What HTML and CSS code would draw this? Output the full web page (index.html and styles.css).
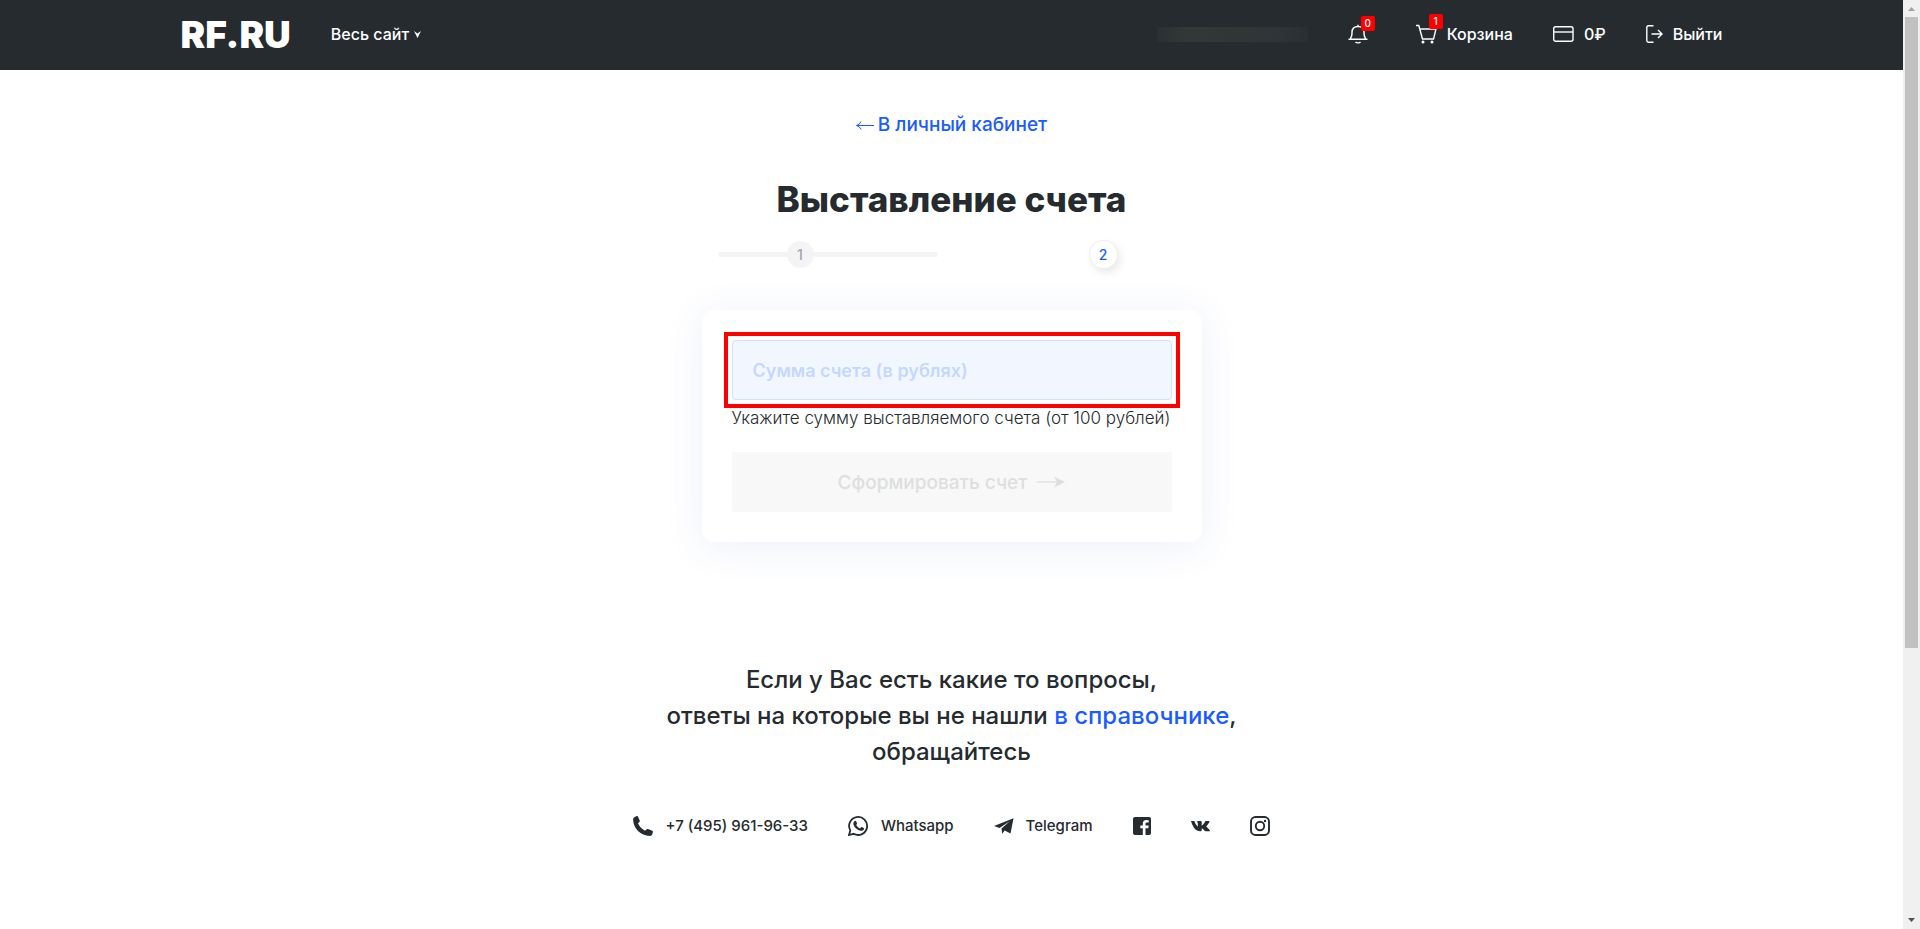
FILE: index.html
```html
<!DOCTYPE html>
<html lang="ru">
<head>
    <meta charset="UTF-8">
    <meta name="viewport" content="width=device-width, initial-scale=1.0">
    <title>Выставление счета</title>
    <link rel="stylesheet" href="styles.css">
</head>
<body>
    <div class="page">
        <!-- Header -->
        <header class="header">
            <div class="header-inner">
                <a href="#" class="logo">RF.RU</a>
                <button type="button" class="site-menu">Весь сайт
                    <svg width="7" height="7" viewBox="0 0 7 7"><path d="M0 0L3.5 2.6L7 0L3.5 7Z" fill="#fff"/></svg>
                </button>
                <nav class="user-nav">
                    <span class="user-name"></span>
                    <a href="#" class="nav-link bell" aria-label="Уведомления">
                        <svg width="20" height="20" viewBox="0 0 20 20" fill="none" stroke="#fff" stroke-width="1.4"><path d="M.5 15.2H19.5M2.8 15V13.5C4 12.5 4 11 4 8.5C4 4.500 6.200 2.500 10 2.500S16 4.500 16 8.500C16 11 16 12.500 17.200 13.500V15M10 .8V2.500M7.500 18C8.500 19.200 11.500 19.200 12.500 18"/></svg>
                        <span class="badge">0</span>
                    </a>
                    <a href="#" class="nav-link cart">
                        <svg width="21" height="20" viewBox="0 0 21 20" fill="none" stroke="#fff" stroke-width="1.4"><path d="M0 1.500H2.800L6.500 15H17.500L20 5H4"/><circle cx="7" cy="18" r="1.500" fill="#fff" stroke="none"/><circle cx="16" cy="18" r="1.500" fill="#fff" stroke="none"/></svg>
                        <span class="badge">1</span>
                        Корзина
                    </a>
                    <a href="#" class="nav-link balance">
                        <svg width="21" height="20" viewBox="0 0 21 20" fill="none" stroke="#fff" stroke-width="1.4"><rect x=".7" y="2.700" width="19.300" height="14.600" rx="2"/><path d="M1 8H20"/></svg>
                        0₽
                    </a>
                    <a href="#" class="nav-link exit">
                        <svg width="17" height="20" viewBox="0 0 17 20" fill="none" stroke="#fff" stroke-width="1.4"><path d="M7.500 1.700H2.500Q.8 1.700 .8 3.400V16.600Q.8 18.300 2.500 18.300H7.500M5.500 10H16M12 6L16 10L12 14"/></svg>
                        Выйти
                    </a>
                </nav>
            </div>
        </header>

        <!-- Invoice form -->
        <main class="main">
            <a href="#" class="back-link">
                <svg width="18" height="10" viewBox="0 0 18 10" fill="none" stroke="#1a5cff" stroke-width="1"><path d="M18 5.500H1M5 1.500Q4 4.500 .5 5.500Q4 6.500 5 9.500"/></svg>
                В личный кабинет
            </a>
            <h1>Выставление счета</h1>
            <ol class="steps">
                <li class="step done"><span class="step-number">1</span></li>
                <li class="step active"><span class="step-number">2</span></li>
            </ol>
            <form class="card">
                <div class="highlight">
                    <input type="text" id="amount" class="amount" placeholder="Сумма счета (в рублях)">
                </div>
                <label for="amount" class="hint">Укажите сумму выставляемого счета (от 100 рублей)</label>
                <button type="submit" class="submit" disabled>Сформировать счет
                    <svg width="28" height="12" viewBox="0 0 28 12"><path d="M0 6H20" stroke="#dddfdf" stroke-width="1.300"/><path d="M17 .5L28 6L17 11.500L20 6Z" fill="#dddfdf"/></svg>
                </button>
            </form>
        </main>

        <!-- Contacts -->
        <footer class="footer">
            <p class="questions">Если у Вас есть какие то вопросы,<br>ответы на которые вы не нашли <a href="#">в справочнике</a>,<br>обращайтесь</p>
            <div class="contacts">
                <a href="#">
                    <svg width="20" height="20" viewBox="0 0 20 20" fill="#252b2f"><path d="M1 1.500L3.700 0Q4.500-.2 4.900 .6L6.700 4.600Q7 5.400 6.400 6L5 7.300Q6.500 11.500 12 14.700L13.700 13.300Q14.300 12.800 15 13.100L19.300 14.800Q20 15.200 19.900 16L19.300 18.300Q18.800 19.900 17 19.900C7.500 19.800 .2 12.500 .1 3.300Q.1 2.100 1 1.500Z"/></svg>
                    +7 (495) 961-96-33
                </a>
                <a href="#">
                    <svg width="21" height="20" viewBox="0 0 21 20"><path d="M1 19L2.300 14.400A9 9 0 1 1 5.700 17.800Z" fill="none" stroke="#252b2f" stroke-width="1.800"/><path d="M6.300 5.200Q7.800 4.300 8.300 5.600L9 7.400Q9.100 8 8.200 9Q9.500 11.500 12 12.400L13.200 11.200Q13.600 10.900 14.200 11.200L15.700 12Q16.300 12.400 16 13.200Q15 15.200 12.800 14.800Q7.200 13.500 5.500 8.800Q5 6.500 6.300 5.200Z" fill="#252b2f"/></svg>
                    Whatsapp
                </a>
                <a href="#">
                    <svg width="20" height="20" viewBox="0 0 20 20" fill="#252b2f"><path d="M0 10L19.500 2.200L16.500 17.500L10.700 14.500L8.200 17.800L7.500 12.500L16 5L5.500 12Z"/></svg>
                    Telegram
                </a>
                <a href="#" aria-label="Facebook">
                    <svg width="18" height="20" viewBox="0 0 18 20"><rect y="1" width="18" height="18" rx="2" fill="#252b2f"/><path d="M12.500 19V12.200H15.300L15.700 9.500H12.500V7.800Q12.500 6.600 13.800 6.600H15.700V4.200Q14.800 4 13.300 4Q9.800 4 9.800 7.500V9.500H7.300V12.200H9.800V19Z" fill="#fff"/></svg>
                </a>
                <a href="#" aria-label="ВКонтакте">
                    <svg width="19" height="20" viewBox="0 0 19 20" fill="#252b2f"><path d="M0 5H3.300Q4.600 9 6.800 10.700V7.300Q6.700 6 5.600 5.800Q6.200 5 7.500 5H9.800Q10.700 5 10.700 6.200V9.700Q13 8 14.500 5H18Q18.800 5 18.400 6Q17.300 8.300 15.200 10.500Q17 12 18.800 14.300Q19.200 15.200 18.200 15.300H15Q14 15.300 12.700 13.700Q11.400 12.200 10.700 12.500V14.300Q10.700 15.300 9.600 15.300Q5.500 15.500 2.800 11.500Q.8 8.500 0 5Z"/></svg>
                </a>
                <a href="#" aria-label="Instagram">
                    <svg width="20" height="20" viewBox="0 0 20 20" fill="none" stroke="#252b2f" stroke-width="1.900"><rect x="1" y="1" width="18" height="18" rx="4.500"/><circle cx="10" cy="10" r="4.200"/><circle cx="15" cy="5" r="1.200" fill="#252b2f" stroke="none"/></svg>
                </a>
            </div>
        </footer>
    </div>

    <!-- Scroll track -->
    <div class="scrollbar">
        <svg width="7" height="4" viewBox="0 0 7 4"><path d="M3.500 0L7 4H0Z" fill="#a3a3a3"/></svg>
        <div class="scroll-thumb"></div>
        <svg class="scroll-down" width="7" height="4" viewBox="0 0 7 4"><path d="M0 0H7L3.500 4Z" fill="#505050"/></svg>
    </div>
</body>
</html>
```
FILE: styles.css
```css
* {
    box-sizing: border-box;
}
body {
    display: flex;
    min-height: 100vh;
    margin: 0;
    font-family: Inter, "Liberation Sans", sans-serif;
    color: #252b2f;
    background-color: #fff;
}
a {
    color: inherit;
    text-decoration: none;
}
svg {
    flex: none;
}
.page {
    flex: 1;
}
.header {
    background-color: #252b2f;
    color: #fff;
}
.header-inner {
    display: flex;
    align-items: center;
    max-width: 1542px;
    height: 70px;
    margin: 0 auto;
    padding-bottom: 2px;
}
.logo {
    font-size: 37px;
    font-weight: 900;
}
.site-menu {
    display: flex;
    align-items: center;
    gap: 5px;
    margin-left: 40px;
    padding: 0;
    border: none;
    background: none;
    color: #fff;
    font-family: inherit;
    font-size: 16px;
    font-weight: 500;
    cursor: pointer;
}
.user-nav {
    display: flex;
    align-items: center;
    gap: 40px;
    margin-left: auto;
    font-size: 16px;
    font-weight: 500;
}
.user-name {
    width: 151px;
    height: 15px;
    background: linear-gradient(90deg, #2b3033, #323738 20%, #2f3436 80%, #2a2f33);
}
.nav-link {
    display: flex;
    align-items: center;
    gap: 10px;
    position: relative;
}
.bell {
    margin-right: 8px;
}
.badge {
    position: absolute;
    top: -8px;
    left: 13px;
    width: 14px;
    height: 15px;
    border-radius: 2px;
    background-color: #f00;
    font-size: 10px;
    line-height: 15px;
    text-align: center;
}
.cart .badge {
    top: -10px;
}
.main {
    display: flex;
    align-items: center;
    flex-direction: column;
}
.back-link {
    display: flex;
    align-items: center;
    gap: 4px;
    margin-top: 43px;
    color: #1a5cff;
    font-size: 19px;
    font-weight: 500;
    line-height: 24px;
}
h1 {
    margin: 40px 0 20px;
    font-size: 35px;
    font-weight: 800;
    line-height: 44px;
}
.steps {
    display: flex;
    gap: 152px;
    width: 468px;
    margin: 0;
    padding: 0;
    list-style: none;
}
.step {
    display: flex;
    align-items: center;
}
.done::before, .done::after {
    content: "";
    width: 69px;
    height: 5px;
    border-radius: 2px 0 0 2px;
    background-color: #f4f4f5;
}
.done::after {
    width: 124px;
    border-radius: 0 2px 2px 0;
}
.step-number {
    width: 27px;
    height: 27px;
    border-radius: 50%;
    background-color: #f4f4f7;
    color: #a3a5a8;
    font-size: 14px;
    font-weight: 500;
    line-height: 27px;
    text-align: center;
}
.active .step-number {
    background-color: #fff;
    box-shadow: 0 0 0 1px #f0f0f2, 3px 4px 10px rgba(0, 0, 0, 0.1);
    color: #1a5cff;
}
.card {
    display: flex;
    flex-direction: column;
    width: 500px;
    margin-top: 42px;
    padding: 30px;
    border-radius: 12px;
    background-color: #fff;
    box-shadow: 0 5px 40px rgba(60, 90, 190, 0.09);
}
.highlight {
    outline: 4px solid #f00;
    outline-offset: 4px;
}
.amount {
    display: block;
    width: 100%;
    height: 60px;
    padding: 0 20px;
    border: 1px solid #d6e2fd;
    border-radius: 3px;
    background-color: #f2f7ff;
    color: #1a5cff;
    font-family: inherit;
    font-size: 18px;
    font-weight: 600;
}
.amount::placeholder {
    color: #c5d7ff;
}
.hint {
    margin: 6px 0 22px;
    font-size: 17px;
    font-weight: 300;
    line-height: 24px;
    white-space: nowrap;
}
.submit {
    display: flex;
    align-items: center;
    justify-content: center;
    gap: 10px;
    height: 60px;
    border: none;
    border-radius: 3px;
    background-color: #f8f8f8;
    color: #dddfdf;
    font-family: inherit;
    font-size: 19px;
    font-weight: 500;
}
.footer {
    margin-top: 120px;
}
.questions {
    margin: 0;
    font-size: 24px;
    font-weight: 500;
    line-height: 36px;
    text-align: center;
}
.questions a {
    color: #1a5cff;
}
.contacts {
    display: flex;
    align-items: center;
    justify-content: center;
    gap: 40px;
    margin-top: 44px;
    font-size: 15px;
    font-weight: 500;
}
.contacts a {
    display: flex;
    align-items: center;
    gap: 12px;
    line-height: 24px;
}
.scrollbar {
    display: flex;
    align-items: center;
    flex-direction: column;
    gap: 6px;
    width: 17px;
    padding: 7px 0;
    background-color: #f0f0f0;
}
.scroll-thumb {
    width: 13px;
    height: 69%;
    background-color: #c1c1c1;
}
.scroll-down {
    margin-top: auto;
}
```
